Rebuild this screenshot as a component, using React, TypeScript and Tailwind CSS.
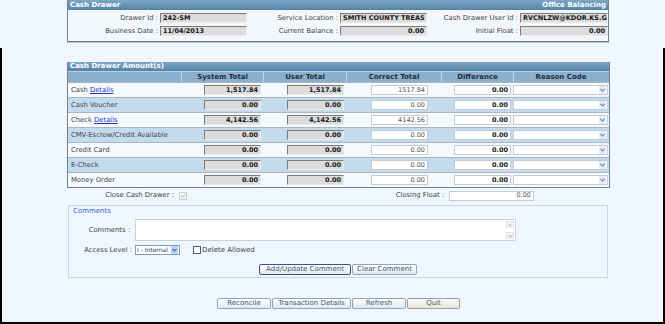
import React from "react";

type Row = { label: string; link?: boolean; sys: string; user: string; correct: string };

const rows: Row[] = [
  { label: "Cash", link: true, sys: "1,517.84", user: "1,517.84", correct: "1517.84" },
  { label: "Cash Voucher", sys: "0.00", user: "0.00", correct: "0.00" },
  { label: "Check", link: true, sys: "4,142.56", user: "4,142.56", correct: "4142.56" },
  { label: "CMV-Escrow/Credit Available", sys: "0.00", user: "0.00", correct: "0.00" },
  { label: "Credit Card", sys: "0.00", user: "0.00", correct: "0.00" },
  { label: "E-Check", sys: "0.00", user: "0.00", correct: "0.00" },
  { label: "Money Order", sys: "0.00", user: "0.00", correct: "0.00" },
];

function ReadBox({ children, className = "" }: { children?: React.ReactNode; className?: string }) {
  return (
    <div
      className={`h-[10px] bg-[#dcdcdc] border border-t-[#7b7b7b] border-l-[#7b7b7b] border-b-[#ececec] border-r-[#ececec] px-[2px] flex items-center overflow-hidden whitespace-nowrap font-bold text-[6.5px] text-[#151515] ${className}`}
    >
      {children}
    </div>
  );
}

function WhiteBox({ children, className = "" }: { children?: React.ReactNode; className?: string }) {
  return (
    <div
      className={`h-[10px] bg-white border border-[#c2ccd6] px-[2px] flex items-center justify-end overflow-hidden whitespace-nowrap text-[6.5px] ${className}`}
    >
      {children}
    </div>
  );
}

function Chevron({ color }: { color: string }) {
  return (
    <svg width="5" height="4" viewBox="0 0 5 4">
      <path d="M0.5 0.8 L2.5 3 L4.5 0.8" fill="none" stroke={color} strokeWidth="1.1" />
    </svg>
  );
}

function Select() {
  return (
    <div className="h-[10px] w-full bg-white border border-[#c2ccd6] flex items-center justify-end">
      <div className="w-[7px] h-[8px] mr-[1px] bg-[#e3ecf7] flex items-center justify-center">
        <Chevron color="#5b82c4" />
      </div>
    </div>
  );
}

function Btn({ children, className = "" }: { children: React.ReactNode; className?: string }) {
  return (
    <div
      className={`h-[11px] flex items-center justify-center rounded-[2px] border text-[7px] text-[#42566d] whitespace-nowrap ${className}`}
    >
      {children}
    </div>
  );
}

export default function App() {
  return (
    <div className="w-[665px] h-[324px] bg-[#eff6fd] flex flex-col font-['DejaVu_Sans',Verdana,sans-serif] text-[6.8px] text-[#444] leading-none overflow-hidden">
      {/* top: cash drawer */}
      <div className="h-[48px] shrink-0">
        <div className="ml-[67px] w-[542px] border-x border-b border-[#6f7d8a] bg-[#f3f7fb] shadow-[0_1px_0_#b8c2cc]">
          <div className="h-[10px] bg-linear-to-b from-[#7ea6c6] to-[#5283aa] flex items-center justify-between px-[2px] text-white font-bold text-[7px]">
            <span>Cash Drawer</span>
            <span>Office Balancing</span>
          </div>
          <div className="grid grid-cols-[179px_180px_181px] gap-y-[3px] pt-[3px] pb-[5px]">
            <div className="flex items-center justify-end gap-[2px]">
              <span>Drawer Id :</span>
              <ReadBox className="w-[87px]">242-SM</ReadBox>
            </div>
            <div className="flex items-center justify-end gap-[2px]">
              <span>Service Location :</span>
              <ReadBox className="w-[87px]">SMITH COUNTY TREAS</ReadBox>
            </div>
            <div className="flex items-center justify-end gap-[2px]">
              <span>Cash Drawer User Id :</span>
              <ReadBox className="w-[88px]">RVCNLZW@KDOR.KS.GOV</ReadBox>
            </div>
            <div className="flex items-center justify-end gap-[2px]">
              <span>Business Date :</span>
              <ReadBox className="w-[87px]">11/04/2013</ReadBox>
            </div>
            <div className="flex items-center justify-end gap-[2px]">
              <span>Current Balance :</span>
              <ReadBox className="w-[87px] justify-end">0.00</ReadBox>
            </div>
            <div className="flex items-center justify-end gap-[2px]">
              <span>Initial Float :</span>
              <ReadBox className="w-[88px] justify-end">0.00</ReadBox>
            </div>
          </div>
        </div>
      </div>

      {/* framed lower part */}
      <div className="flex-1 flex flex-col border-l-2 border-r-2 border-b-2 border-black">
        {/* amounts table */}
        <div className="mt-[14px] ml-[65px] w-[543px] border-x border-b border-[#6f7f8d]">
          <div className="h-[9px] bg-linear-to-b from-[#7ea6c6] to-[#5283aa] flex items-center px-[2px] text-white font-bold text-[7px]">
            Cash Drawer Amount(s)
          </div>
          <div className="h-[11px] flex bg-[#8cb0cc] border-t border-[#b9d0e3] font-bold text-[7px] text-[#1d2d40]">
            <div className="w-[113px]" />
            <div className="w-[82px] border-l border-[#c4d7e7] flex items-center justify-center">System Total</div>
            <div className="w-[83px] border-l border-[#c4d7e7] flex items-center justify-center">User Total</div>
            <div className="w-[95px] border-l border-[#c4d7e7] flex items-center justify-center">Correct Total</div>
            <div className="w-[72px] border-l border-[#c4d7e7] flex items-center justify-center">Difference</div>
            <div className="w-[95px] border-l border-[#c4d7e7] flex items-center justify-center">Reason Code</div>
          </div>
          {rows.map((r, i) => (
            <div
              key={r.label}
              className={`h-[15px] flex items-center border-t border-[#a9b5c0] ${i % 2 === 1 ? "bg-[#c4dbee]" : "bg-[#f6f9fc]"}`}
            >
              <div className="w-[113px] pl-[3px] whitespace-nowrap">
                {r.label}
                {r.link && (
                  <>
                    {" "}
                    <span className="text-[#2038c0] underline">Details</span>
                  </>
                )}
              </div>
              <div className="w-[82px] flex justify-end pr-[2px]">
                <ReadBox className="w-[57px] justify-end">{r.sys}</ReadBox>
              </div>
              <div className="w-[83px] flex justify-end pr-[2px]">
                <ReadBox className="w-[57px] justify-end">{r.user}</ReadBox>
              </div>
              <div className="w-[95px] flex justify-end pr-[13px]">
                <WhiteBox className="w-[57px] text-[#555]">{r.correct}</WhiteBox>
              </div>
              <div className="w-[72px] flex justify-end pr-[2px]">
                <WhiteBox className="w-[57px] font-bold text-[#151515]">0.00</WhiteBox>
              </div>
              <div className="w-[95px] flex">
                <Select />
              </div>
            </div>
          ))}
        </div>

        {/* close / closing float */}
        <div className="mt-[2px] h-[11px] flex items-center">
          <div className="w-[172px] text-right">Close Cash Drawer :</div>
          <div className="ml-[5px] w-[8px] h-[8px] border border-[#c9cfd5] bg-[#f3f5f7] flex items-center justify-center">
            <svg width="6" height="6" viewBox="0 0 6 6">
              <path d="M1 3 L2.4 4.5 L5 1.2" fill="none" stroke="#a9c9a4" strokeWidth="1" />
            </svg>
          </div>
          <div className="w-[257px] text-right">Closing Float :</div>
          <WhiteBox className="ml-[5px] w-[85px] text-[#555]">0.00</WhiteBox>
        </div>

        {/* comments */}
        <div className="mt-[4px] ml-[66px] w-[540px] h-[73px] border border-[#cbd5de] flex flex-col">
          <div className="ml-[4px] mt-[2px] h-[8px] text-[7px] text-[#3465c8]">Comments</div>
          <div className="mt-[3px] flex items-start">
            <div className="w-[61px] text-right mt-[8px]">Comments :</div>
            <div className="ml-[5px] w-[381px] h-[22px] bg-white border border-[#c9d2da] flex justify-end">
              <div className="w-[8px] flex flex-col justify-between py-[1px] mr-[1px]">
                <div className="h-[7px] border border-[#dde3e8] bg-[#f4f6f8] flex items-center justify-center">
                  <svg width="4" height="3" viewBox="0 0 4 3">
                    <path d="M0 3 L2 0.5 L4 3 Z" fill="#b7bfc7" />
                  </svg>
                </div>
                <div className="h-[7px] border border-[#dde3e8] bg-[#f4f6f8] flex items-center justify-center">
                  <Chevron color="#b7bfc7" />
                </div>
              </div>
            </div>
          </div>
          <div className="mt-[4px] h-[10px] flex items-center">
            <div className="w-[63px] text-right">Access Level :</div>
            <div className="ml-[3px] w-[45px] h-[10px] bg-white border border-[#7f9db9] flex items-center justify-between pl-[1px] text-[6px] text-[#2c3e60] whitespace-nowrap">
              <span>I - Internal</span>
              <div className="w-[7px] h-[8px] mr-[1px] shrink-0 bg-[#bcd2f0] flex items-center justify-center">
                <Chevron color="#4064a8" />
              </div>
            </div>
            <div className="ml-[13px] w-[8px] h-[8px] border border-[#5a5f66] bg-white" />
            <span className="ml-[1px] text-[7px]">Delete Allowed</span>
          </div>
          <div className="mt-[9px] ml-[190px] flex gap-[1px]">
            <Btn className="w-[92px] border-[#36538c] bg-linear-to-b from-[#ffffff] to-[#e3e8ee]">Add/Update Comment</Btn>
            <Btn className="w-[65px] border-[#90a4b8] bg-linear-to-b from-[#ffffff] to-[#e3e8ee]">Clear Comment</Btn>
          </div>
        </div>

        {/* bottom actions */}
        <div className="mt-[20px] ml-[215px] flex gap-[1px]">
          <Btn className="w-[54px] border-[#90a4b8] bg-linear-to-b from-[#ffffff] to-[#e3e8ee]">Reconcile</Btn>
          <Btn className="w-[79px] border-[#90a4b8] bg-linear-to-b from-[#ffffff] to-[#e3e8ee]">Transaction Details</Btn>
          <Btn className="w-[54px] border-[#90a4b8] bg-linear-to-b from-[#ffffff] to-[#e3e8ee]">Refresh</Btn>
          <Btn className="w-[53px] border-[#90a4b8] bg-linear-to-b from-[#fcfaf3] to-[#ebe5d3]">Quit</Btn>
        </div>
      </div>
    </div>
  );
}
